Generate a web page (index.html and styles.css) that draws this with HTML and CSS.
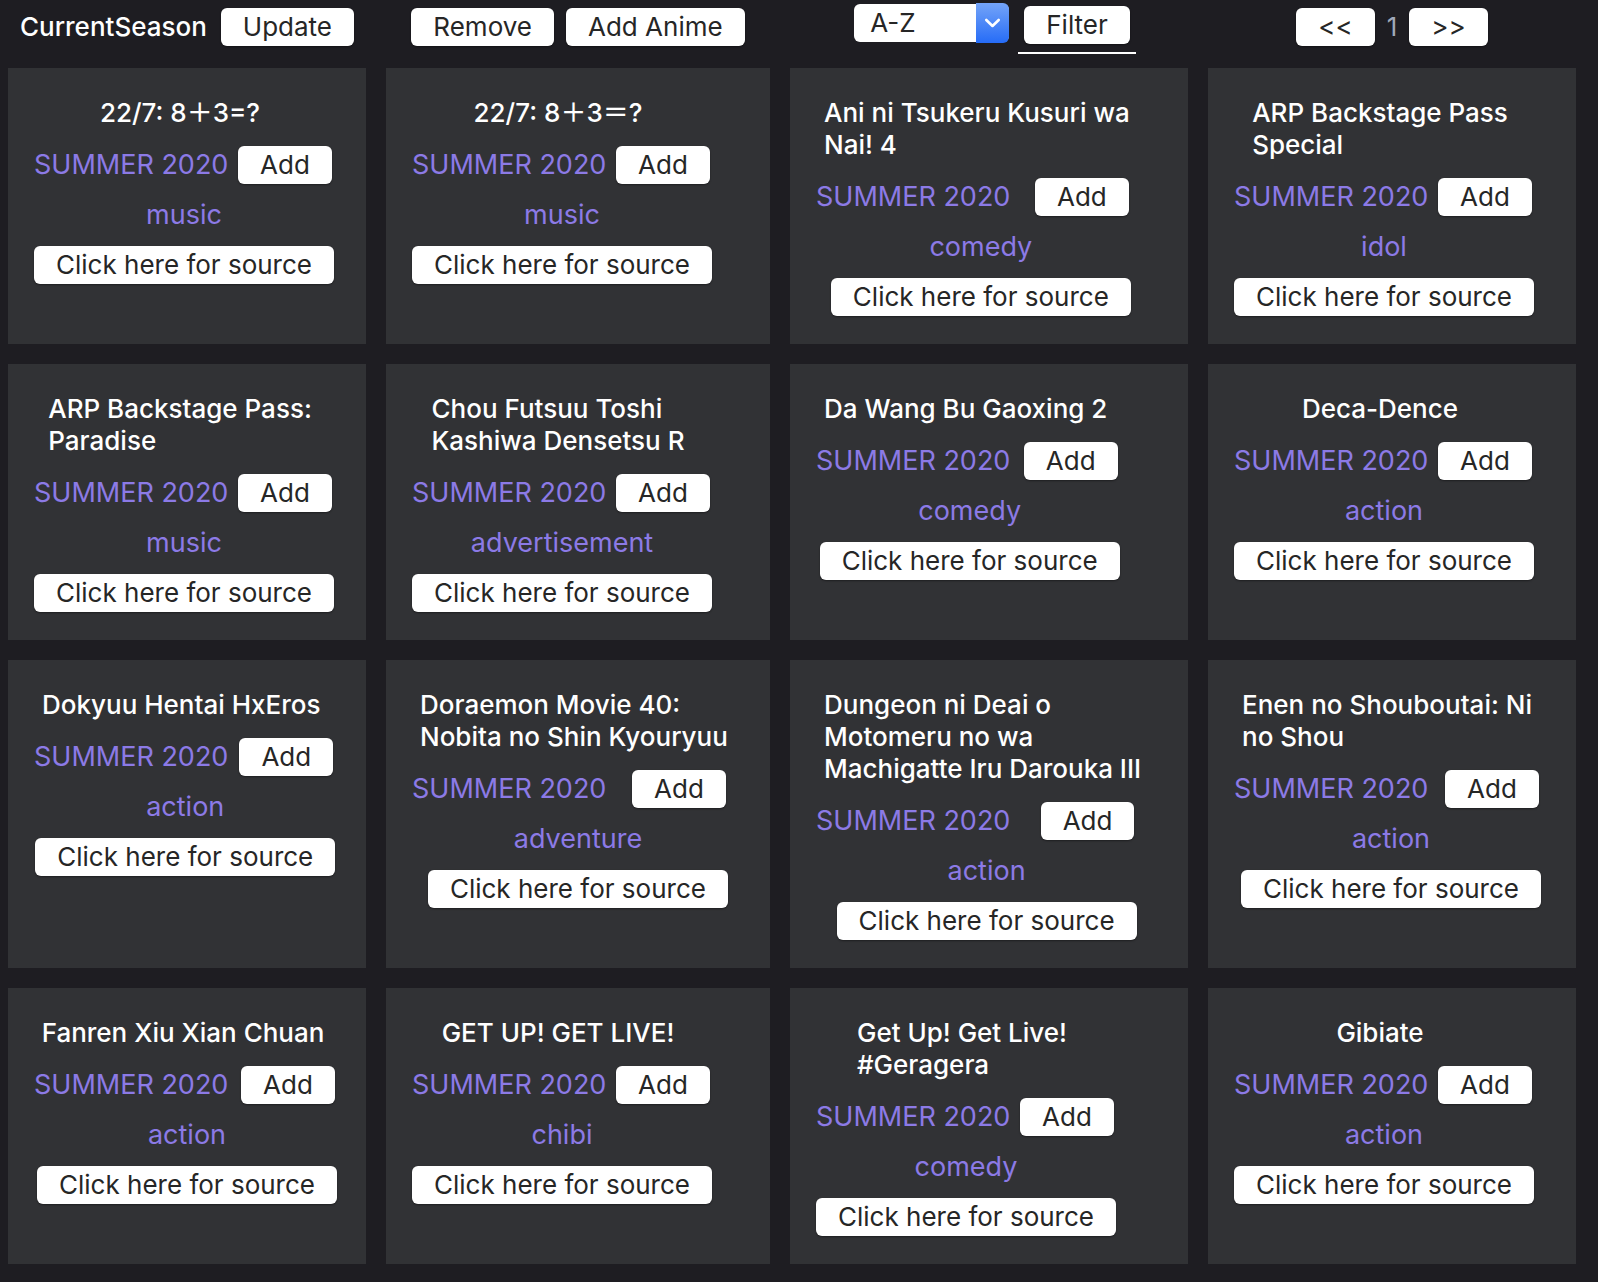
FILE: index.html
```html
<!DOCTYPE html>
<html lang="en">
<head>
<meta charset="utf-8">
<title>CurrentSeason</title>
<link rel="stylesheet" href="styles.css">
</head>
<body>
<header class="toolbar columns">
  <div class="tools"><span class="page-name">CurrentSeason</span><button class="btn" type="button">Update</button></div>
  <div class="tools"><button class="btn" type="button">Remove</button><button class="btn" type="button">Add Anime</button></div>
  <div class="tools tools-filter">
    <div class="picker">
      <select class="picker-select" aria-label="Sort order"><option>A-Z</option><option>Z-A</option></select>
      <span class="picker-arrow"><svg width="17" height="12" viewBox="0 0 17 12" fill="none" stroke="#fff" stroke-width="2.600" stroke-linecap="round" stroke-linejoin="round"><path d="M2.300 3 8.500 9 14.700 3"/></svg></span>
    </div>
    <div class="tab"><button class="btn" type="button">Filter</button></div>
  </div>
  <nav class="tools" aria-label="Pages"><button class="btn" type="button">&lt;&lt;</button><span class="page-number">1</span><button class="btn" type="button">&gt;&gt;</button></nav>
</header>
<main class="catalog columns"></main>
<script src="catalog.js"></script>
</body>
</html>
```
FILE: styles.css
```css
* {
  box-sizing: border-box;
}

body {
  margin: 0;
  padding: 0 22px 18px 8px;
  background: #1e1d22;
  color: #fff;
  font-family: Inter, "Noto Sans CJK JP", sans-serif;
  font-size: 26px;
  line-height: 32px;
}

.columns {
  display: grid;
  grid-template-columns: 358fr 384fr 398fr 368fr;
  column-gap: 20px;
}

.toolbar {
  height: 68px;
}

.tools {
  display: flex;
  justify-content: center;
  align-items: flex-start;
  gap: 12px;
  padding-top: 8px;
  line-height: 38px;
  white-space: nowrap;
}

.tools-filter {
  gap: 9px;
  padding: 0 0 0 12px;
}

.page-name {
  padding-right: 2px;
  font-weight: 500;
}

.page-number {
  color: #a0a8ba;
}

.btn {
  height: 38px;
  padding: 0 22px;
  border: 0;
  border-radius: 6px;
  background: #fff;
  box-shadow: 0 1px 2px rgba(0, 0, 0, 0.4);
  color: #262626;
  font: inherit;
  line-height: 38px;
  white-space: nowrap;
}

.picker {
  position: relative;
  margin-top: 3px;
  padding: 1px 0;
}

.picker-select {
  display: block;
  width: 155px;
  height: 38px;
  padding: 0 40px 0 16px;
  border: 0;
  border-radius: 6px;
  appearance: none;
  background: #fff;
  color: #262626;
  font: inherit;
}

.picker-arrow {
  position: absolute;
  top: 0;
  right: 0;
  display: grid;
  place-items: center;
  width: 33px;
  height: 40px;
  border-radius: 0 6px 6px 0;
  background: linear-gradient(#74a4f8, #266cf7);
  pointer-events: none;
}

.tab {
  padding: 6px 6px 8px;
  border-bottom: 2px solid #fff;
  line-height: 0;
}

.catalog {
  row-gap: 20px;
}

.card {
  padding: 29px 26px 28px;
  background: #313235;
}

.card-body {
  display: grid;
  grid-template-columns: 202px 1fr;
  justify-items: center;
  row-gap: 12px;
  width: fit-content;
  min-width: 300px;
}

.title {
  grid-column: 1 / -1;
  margin: 0 16px 5px 8px;
  font-size: inherit;
  font-weight: 500;
  white-space: nowrap;
}

.season,
.genre {
  color: #8c7ae6;
  font-size: 27px;
  line-height: 38px;
  white-space: nowrap;
}

.season {
  justify-self: start;
}

.genre,
.source {
  grid-column: 1 / -1;
}
```
FILE: catalog.js
```js
const shows = [
  [["22/7: 8+3=?"], "music"],
  [["22/7: 8+3=?"], "music"],
  [["Ani ni Tsukeru Kusuri wa", "Nai! 4"], "comedy"],
  [["ARP Backstage Pass", "Special"], "idol"],
  [["ARP Backstage Pass:", "Paradise"], "music"],
  [["Chou Futsuu Toshi", "Kashiwa Densetsu R"], "advertisement"],
  [["Da Wang Bu Gaoxing 2"], "comedy"],
  [["Deca-Dence"], "action"],
  [["Dokyuu Hentai HxEros"], "action"],
  [["Doraemon Movie 40:", "Nobita no Shin Kyouryuu"], "adventure"],
  [["Dungeon ni Deai o", "Motomeru no wa", "Machigatte Iru Darouka III"], "action"],
  [["Enen no Shouboutai: Ni", "no Shou"], "action"],
  [["Fanren Xiu Xian Chuan"], "action"],
  [["GET UP! GET LIVE!"], "chibi"],
  [["Get Up! Get Live!", "#Geragera"], "comedy"],
  [["Gibiate"], "action"],
];

// The first two titles are spelled with full-width signs.
shows[0][0][0] = "22/7: 8\uFF0B3=?";
shows[1][0][0] = "22/7: 8\uFF0B3\uFF1D?";

document.querySelector(".catalog").innerHTML = shows
  .map(([lines, genre]) => `
  <article class="card"><div class="card-body">
    <h2 class="title">${lines.join("<br>")}</h2>
    <span class="season">SUMMER 2020</span><button class="btn" type="button">Add</button>
    <span class="genre">${genre}</span>
    <button class="btn source" type="button">Click here for source</button>
  </div></article>`)
  .join("");
```
